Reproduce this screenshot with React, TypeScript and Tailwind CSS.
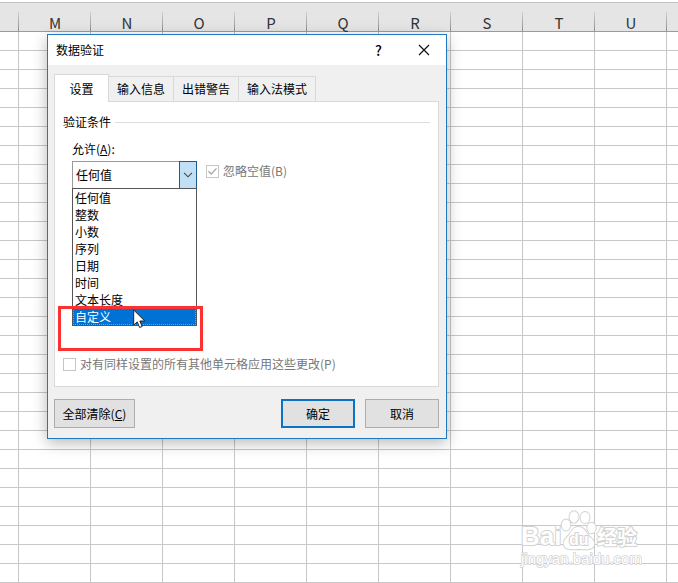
import { useState } from 'react'
import type { ReactNode } from 'react'
import clsx from 'clsx'

// ─── Data ─────────────────────────────────────────────────────────────────────

const COLUMNS = ['', 'M', 'N', 'O', 'P', 'Q', 'R', 'S', 'T', 'U', '']
const ROW_COUNT = 29

const TABS = ['设置', '输入信息', '出错警告', '输入法模式']

const ALLOW_OPTIONS = ['任何值', '整数', '小数', '序列', '日期', '时间', '文本长度', '自定义']

// ─── Sheet ────────────────────────────────────────────────────────────────────

function columnWidth(i: number) {
  if (i === 0) return 'w-[19px]'
  // The last column takes whatever is left of the window
  return i === COLUMNS.length - 1 ? 'w-auto' : 'w-[72px]'
}

function Sheet() {
  return (
    <table className="w-full table-fixed border-separate border-spacing-0">
      <thead>
        <tr>
          {COLUMNS.map((name, i) => (
            <th
              key={i}
              className={clsx(
                'h-[30px] border-t border-b border-t-[#c0c0c0] border-b-[#9b9b9b] bg-[#e5e5e5] p-0 align-bottom font-normal',
                i < COLUMNS.length - 1 &&
                  'bg-[linear-gradient(to_bottom,#d0d0d0,#8c8c8c)] bg-[length:1px_19px] bg-right-bottom bg-no-repeat',
                columnWidth(i),
              )}
            >
              <span className="block text-[15px] leading-4 text-[#333333]">{name}</span>
            </th>
          ))}
        </tr>
      </thead>
      <tbody>
        {Array.from({ length: ROW_COUNT }, (_, row) => (
          <tr key={row}>
            {COLUMNS.map((_, i) => (
              <td
                key={i}
                className={clsx(
                  'h-[19px] border-b border-[#c8c8c8] p-0',
                  i < COLUMNS.length - 1 && 'border-r',
                )}
              />
            ))}
          </tr>
        ))}
      </tbody>
    </table>
  )
}

// ─── Form controls ────────────────────────────────────────────────────────────

function DisabledCheck({
  id,
  checked = false,
  children,
}: {
  id: string
  checked?: boolean
  children: ReactNode
}) {
  return (
    <div className="flex h-4 items-center gap-1">
      <span className="relative block size-[13px]">
        <input
          id={id}
          type="checkbox"
          defaultChecked={checked}
          disabled
          className="block size-full appearance-none border border-[#c6c6c6] bg-white"
        />
        {checked && (
          <svg
            viewBox="0 0 13 13"
            aria-hidden="true"
            className="pointer-events-none absolute inset-0 size-full"
            fill="none"
            stroke="#a8a8a8"
            strokeWidth="1.3"
          >
            <path d="M2.5 6.2 5.2 9l5.3-5.6" />
          </svg>
        )}
      </span>
      <label htmlFor={id} className="text-[#777777]">
        {children}
      </label>
    </div>
  )
}

function AllowSelect() {
  const [value, setValue] = useState('任何值')

  return (
    <div className="relative w-[125px]">
      <select
        id="allow"
        value={value}
        onChange={(e) => setValue(e.target.value)}
        className="block h-7 w-full appearance-none border border-[#9a9a9a] bg-white pl-[3px] outline-none"
      >
        {ALLOW_OPTIONS.map((option) => (
          <option key={option}>{option}</option>
        ))}
      </select>
      <span className="pointer-events-none absolute top-0 right-0 flex h-7 w-[18px] items-center justify-center border border-[#1d5c8c] bg-[#c2e0f5]">
        <svg width="10" height="6" viewBox="0 0 10 6" fill="none" stroke="#444" strokeWidth="1.1">
          <path d="M1 .8 5 4.8 9 .8" />
        </svg>
      </span>
      <ul
        role="listbox"
        aria-label="允许"
        className="absolute top-[27px] left-0 z-10 w-full border border-[#555555] bg-white"
      >
        {ALLOW_OPTIONS.map((option) => {
          const active = option === '自定义'
          return (
            <li
              key={option}
              role="option"
              aria-selected={active}
              onClick={() => setValue(option)}
              className={clsx(
                'pl-0.5 leading-[17px]',
                active &&
                  'bg-[#0072d6] text-white outline-1 -outline-offset-1 outline-dotted outline-[#c98b4e]',
              )}
            >
              {option}
            </li>
          )
        })}
      </ul>
    </div>
  )
}

// ─── Dialog ───────────────────────────────────────────────────────────────────

function ValidationDialog() {
  return (
    <div
      role="dialog"
      aria-labelledby="dialog-title"
      className="absolute top-[34px] left-[47px] w-[400px] border border-[#1f78c0] bg-[#f0f0f0] shadow-[0_4px_14px_rgba(0,0,0,0.28)]"
    >
      <header className="flex h-[30px] items-center bg-white pl-2">
        <h1 id="dialog-title" className="flex-1">
          数据验证
        </h1>
        <button type="button" aria-label="帮助" className="w-[45px] text-sm font-medium">
          ?
        </button>
        <button type="button" aria-label="关闭" className="flex w-[45px] justify-center">
          <svg width="12" height="12" viewBox="0 0 12 12" stroke="#111" strokeWidth="1.2">
            <path d="M1 1l10 10M11 1 1 11" />
          </svg>
        </button>
      </header>

      <div className="pt-[9px] pr-[7px] pb-2.5 pl-1.5">
        <div role="tablist" className="flex items-end">
          {TABS.map((tab, i) => (
            <button
              key={tab}
              type="button"
              role="tab"
              aria-selected={i === 0}
              className={clsx(
                'border-t border-r border-[#d9d9d9]',
                i === 0
                  ? 'relative -mb-px h-7 w-[55px] border-l bg-white'
                  : 'h-[25px] bg-[#f0f0f0] px-2',
              )}
            >
              {tab}
            </button>
          ))}
        </div>

        <div
          role="tabpanel"
          className="flex min-h-[286px] flex-col justify-between border border-[#d9d9d9] bg-white px-2 pt-3 pb-3.5"
        >
          <div>
            <h2 className="flex items-center gap-1">
              验证条件
              <span className="h-px flex-1 bg-[#dddddd]" />
            </h2>
            <div className="mt-[11px] pl-[9px]">
              <label htmlFor="allow" className="block">
                允许(<u>A</u>):
              </label>
              <div className="mt-1 flex items-start gap-[9px]">
                <AllowSelect />
                <div className="pt-0.5">
                  <DisabledCheck id="ignore-blank" checked>
                    忽略空值(B)
                  </DisabledCheck>
                </div>
              </div>
            </div>
          </div>
          <DisabledCheck id="apply-all">对有同样设置的所有其他单元格应用这些更改(P)</DisabledCheck>
        </div>

        <footer className="mt-3 flex gap-2.5">
          <button
            type="button"
            className="mr-auto h-[29px] w-[81px] border border-[#adadad] bg-[#e1e1e1]"
          >
            全部清除(<u>C</u>)
          </button>
          <button
            type="button"
            className="h-[29px] w-[74px] border-2 border-[#0b72c4] bg-[#e1e1e1]"
          >
            确定
          </button>
          <button type="button" className="h-[29px] w-[74px] border border-[#adadad] bg-[#e1e1e1]">
            取消
          </button>
        </footer>
      </div>
    </div>
  )
}

// ─── Overlays ─────────────────────────────────────────────────────────────────

function Pointer() {
  return (
    <svg
      width="13"
      height="20"
      viewBox="0 0 13 20"
      aria-hidden="true"
      className="pointer-events-none absolute top-[309px] left-[133px] z-30"
    >
      <path
        d="M.7 1v15.2l3.5-3.3 2.4 5.6 2.6-1.1-2.4-5.4h5z"
        fill="#fff"
        stroke="#222"
        strokeWidth="1"
        strokeLinejoin="round"
      />
    </svg>
  )
}

function Watermark() {
  return (
    <svg
      width="124"
      height="62"
      viewBox="0 0 124 62"
      className="pointer-events-none absolute top-[508px] left-[518px] font-['Liberation_Sans','Noto_Sans_CJK_SC',sans-serif] font-bold"
      fill="#fff"
      stroke="#d2d2d2"
      strokeWidth="2"
      strokeLinejoin="round"
      paintOrder="stroke"
    >
      <text x="3" y="37" fontSize="26">
        Bai
      </text>
      <g strokeWidth="2">
        <ellipse cx="56" cy="9" rx="4.500" ry="5.800" />
        <ellipse cx="67" cy="9.500" rx="4.500" ry="5.500" />
        <ellipse cx="48" cy="17" rx="4.300" ry="5.500" />
        <ellipse cx="73.500" cy="20" rx="4.200" ry="5.300" />
        <path d="M60 19c-5 0-6 4-9 8-4 4-6 6-5 10 1 4 5 5 15 4 10 1 14 0 15-4 1-4-2-6-6-10-3-4-4-8-10-8z" />
      </g>
      <text x="51" y="37" fontSize="16">
        du
      </text>
      <text x="79" y="37" fontSize="20">
        经验
      </text>
      <text x="3" y="56" fontSize="15" strokeWidth="1.500" className="font-normal">
        jingyan.baidu.com
      </text>
    </svg>
  )
}

// ─── App ──────────────────────────────────────────────────────────────────────

export default function App() {
  return (
    <main className="relative min-h-screen overflow-hidden bg-white pt-0.5 font-['Noto_Sans_CJK_SC',sans-serif] text-xs leading-4 text-black">
      <Sheet />
      <ValidationDialog />
      {/* Red callout around the last option */}
      <div className="pointer-events-none absolute top-[306px] left-[58px] z-20 h-[45px] w-[145px] border-3 border-[#fa3232]" />
      <Pointer />
      <Watermark />
    </main>
  )
}
